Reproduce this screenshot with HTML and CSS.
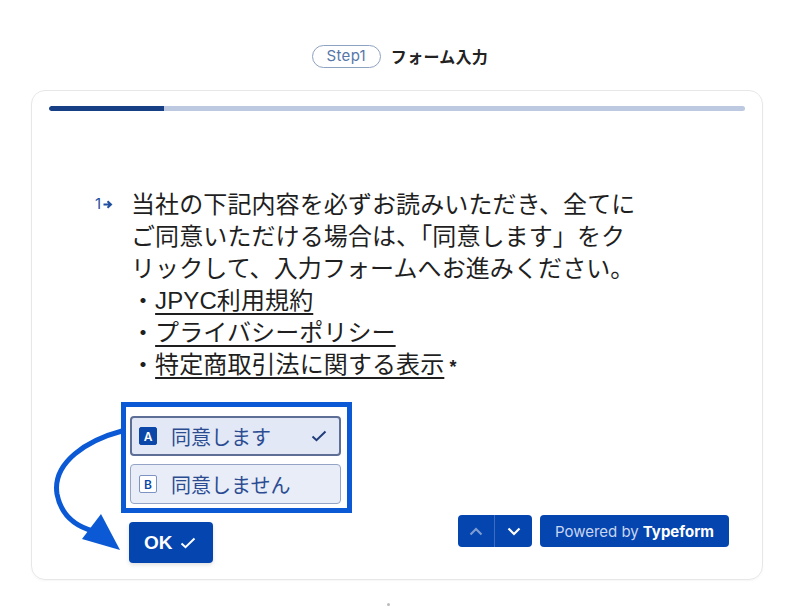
FILE: index.html
```html
<!DOCTYPE html>
<html>
  <head>
    <title>Step1 フォーム入力</title>
    <link rel="stylesheet" href="styles.css">
  </head>
  <body>
    <div class="steps">
      <span class="step-pill">Step1</span>
      <span class="step-title">フォーム入力</span>
    </div>

    <div class="card">
      <div class="progress"><div class="progress-fill"></div></div>

      <div class="question">
        <div class="q-num">1<svg class="q-arrow" width="10" height="9" viewBox="0 0 10 9"><path d="M0.5 4.5 H7.5 M4.5 1.2 L8 4.5 L4.5 7.8" fill="none" stroke="#1e4fa0" stroke-width="2"/></svg></div>
        <div class="q-body">
          <p class="q-text">当社の下記内容を必ずお読みいただき、全てに<br>ご同意いただける場合は、「同意します」をク<br>リックして、入力フォームへお進みください。<br>・<a href="#">JPYC利用規約</a><br>・<a href="#">プライバシーポリシー</a><br>・<a href="#">特定商取引法に関する表示</a><span class="req"> *</span></p>

          <div class="choices">
            <div class="choice selected">
              <span class="key">A</span>
              <span class="label">同意します</span>
              <svg class="tick" width="16" height="12" viewBox="0 0 16 12"><path d="M1.5 6.5 L5.5 10.2 L14.5 1.5" fill="none" stroke="#1f3d7a" stroke-width="2"/></svg>
            </div>
            <div class="choice">
              <span class="key">B</span>
              <span class="label">同意しません</span>
            </div>
          </div>
        </div>
      </div>

      <div class="bottom">
        <button class="ok" type="button">OK <svg width="16" height="12" viewBox="0 0 16 12"><path d="M1.5 6.5 L5.5 10.2 L14.5 1.5" fill="none" stroke="#fff" stroke-width="2"/></svg></button>
        <div class="nav">
          <div class="arrows">
            <button class="up" type="button"><svg width="14" height="9" viewBox="0 0 14 9"><path d="M1.5 7.5 L7 2 L12.5 7.5" fill="none" stroke="#7f9cd2" stroke-width="2.2"/></svg></button>
            <button class="down" type="button"><svg width="14" height="9" viewBox="0 0 14 9"><path d="M1.5 1.5 L7 7 L12.5 1.5" fill="none" stroke="#fff" stroke-width="2.2"/></svg></button>
          </div>
          <a class="powered" href="#">Powered by <b>Typeform</b></a>
        </div>
      </div>
    </div>

    <svg class="pointer" width="90" height="140" viewBox="40 420 90 140">
      <path d="M122 431 C 88 440 52 462 57 494 C 61 515 75 526 93 531" fill="none" stroke="#0b59d4" stroke-width="5" stroke-linecap="round"/>
      <polygon points="101,514 82,539 120,550" fill="#0b59d4"/>
    </svg>

    <div class="dot"></div>
  </body>
</html>
```

FILE: styles.css
```css
body { margin: 0; background: #fff; position: relative; height: 607px; overflow: hidden; font-family: "Liberation Sans", "Noto Sans CJK JP", sans-serif; color: #1f1f1f; }

.steps { display: flex; justify-content: center; align-items: center; gap: 10px; padding-top: 45px; height: 22px; }
.step-pill { box-sizing: border-box; width: 69px; height: 23px; border: 1.5px solid #8ea2c2; border-radius: 12px; font-family: Inter, sans-serif; font-size: 15px; line-height: 20px; letter-spacing: 0.3px; color: #5677a8; text-align: center; }
.step-title { font-family: "Noto Sans CJK JP", sans-serif; font-weight: 700; font-size: 16px; color: #222; letter-spacing: 0.3px; }

.card { box-sizing: border-box; margin: 23px 0 0 31px; width: 732px; height: 490px; border: 1px solid #e7e7e7; border-radius: 14px; box-shadow: 0 1px 2px rgba(0,0,0,0.04); }

.progress { margin: 15px 17px 0 17px; height: 5px; background: #bdc9e0; border-radius: 3px; overflow: hidden; }
.progress-fill { width: 115px; height: 100%; background: #173f86; border-radius: 3px 0 0 3px; }

.question { display: flex; margin-top: 78px; padding-left: 63px; }
.q-num { width: 36px; font-family: Inter, sans-serif; font-size: 15px; line-height: 30px; color: #1e4fa0; }
.q-arrow { margin-left: 2px; vertical-align: 0; }
.q-body { width: 560px; }
.q-text { margin: 0; font-size: 24px; line-height: 32px; letter-spacing: 0.1px; color: #1f1f1f; white-space: nowrap; }
.q-text a { color: #1f1f1f; text-decoration: underline; text-decoration-thickness: 1.5px; text-underline-offset: 4px; }
.req { font-size: 18px; font-weight: 700; }

.choices { box-sizing: border-box; width: 231px; margin: 19px 0 0 -10px; border: 5px solid #0b59d4; padding: 9px 6px 4px 4px; display: flex; flex-direction: column; gap: 8px; background: #fff; }
.choice { box-sizing: border-box; height: 40px; display: flex; align-items: center; padding: 0 10px 0 8px; background: #e8edf8; border: 1px solid #93a4c6; border-radius: 4px; font-family: "Noto Sans CJK JP", sans-serif; font-size: 20px; color: #2c4c92; }
.choice.selected { border: 2px solid #5d6f96; background: #e2e8f5; padding-left: 7px; }
.key { box-sizing: border-box; width: 18px; height: 18px; margin-right: 14px; display: flex; align-items: center; justify-content: center; font-family: Inter, sans-serif; font-weight: 600; font-size: 12px; background: #fff; color: #0a47a9; border: 1px solid #7d93c2; border-radius: 2px; }
.selected .key { background: #0a47a9; color: #fff; border-color: #0a47a9; }
.label { flex: 1; }
.tick { margin-right: 2px; }

.bottom { display: flex; justify-content: space-between; align-items: flex-start; margin-top: 9px; padding: 0 33px 0 97px; }
.ok { display: flex; align-items: center; gap: 7px; width: 84px; height: 41px; padding: 0 0 0 15px; border: none; border-radius: 4px; background: #0445af; color: #fff; font-family: "Liberation Sans", sans-serif; font-weight: 700; font-size: 19px; box-shadow: 0 2px 4px rgba(0,0,0,0.12); }

.nav { display: flex; gap: 8px; margin-top: -7px; }
.arrows { display: flex; border-radius: 4px; overflow: hidden; }
.arrows button { width: 37px; height: 32px; border: none; padding: 0; background: #0445af; display: flex; align-items: center; justify-content: center; }
.arrows .up { border-right: 1px solid #3b6cc0; }
.powered { display: flex; align-items: center; justify-content: center; width: 189px; height: 32px; border-radius: 4px; background: #0445af; color: #c9d6ef; font-family: Inter, sans-serif; font-size: 15px; text-decoration: none; }
.powered b { color: #fff; margin-left: 4px; font-weight: 700; }

.pointer { position: absolute; left: 40px; top: 420px; }
.dot { position: absolute; left: 387px; top: 603px; width: 3px; height: 3px; border-radius: 50%; background: #bbb; }
```
